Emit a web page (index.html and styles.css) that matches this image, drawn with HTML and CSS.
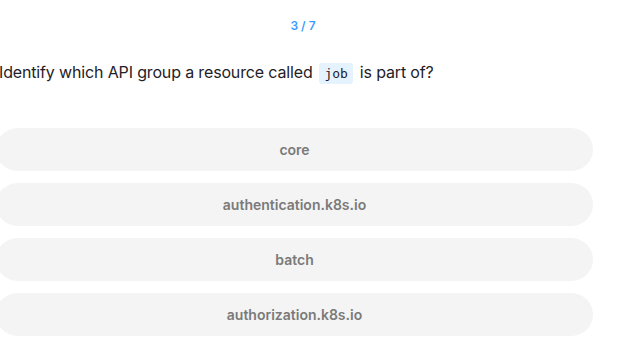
FILE: index.html
```html
<!DOCTYPE html>
<html>
<head>
<meta charset="utf-8">
<link rel="stylesheet" href="styles.css">
</head>
<body>
<div class="quiz">
  <div class="counter">3 / 7</div>
  <p class="question">Identify which API group a resource called <code class="code">job</code> is part of?</p>
  <div class="options">
    <button class="option">core</button>
    <button class="option">authentication.k8s.io</button>
    <button class="option">batch</button>
    <button class="option">authorization.k8s.io</button>
  </div>
</div>
</body>
</html>
```
FILE: styles.css
```css
html, body {
  margin: 0;
  padding: 0;
  background: #ffffff;
}
body {
  font-family: Inter, "Noto Sans", sans-serif;
  overflow: hidden;
}
.quiz {
  margin-left: -4px;
  width: 597px;
  display: flex;
  flex-direction: column;
}
.counter {
  margin-top: 18px;
  padding-left: 17px;
  text-align: center;
  font-size: 12px;
  line-height: 16px;
  font-weight: 600;
  color: #3a9dff;
}
.question {
  margin: 26px 0 0 0;
  padding-left: 3px;
  font-size: 16px;
  line-height: 24px;
  letter-spacing: -0.15px;
  color: #1f2128;
}
.code {
  font-family: "DejaVu Sans Mono", monospace;
  font-size: 13px;
  letter-spacing: 0;
  background: #e5f3fe;
  border-radius: 3px;
  padding: 3px 5.5px;
  margin: 0 2px;
  color: #1f2128;
}
.options {
  margin-top: 42px;
  display: flex;
  flex-direction: column;
  gap: 12px;
}
.option {
  height: 43px;
  border: none;
  border-radius: 22px;
  background: #f4f4f4;
  font-family: Inter, "Noto Sans", sans-serif;
  font-size: 14px;
  font-weight: 600;
  color: #7a7a7a;
  padding: 0;
}
```
